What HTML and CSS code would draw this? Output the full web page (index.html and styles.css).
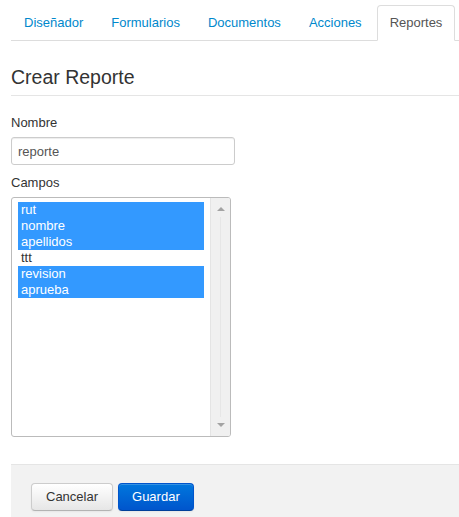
FILE: index.html
```html
<!DOCTYPE html>
<html lang="es">
<head>
<meta charset="utf-8">
<link rel="stylesheet" href="styles.css">
</head>
<body>
<div class="page">
  <ul class="tabs">
    <li class="tab"><a href="#">Diseñador</a></li>
    <li class="tab"><a href="#">Formularios</a></li>
    <li class="tab"><a href="#">Documentos</a></li>
    <li class="tab"><a href="#">Acciones</a></li>
    <li class="tab active"><a href="#">Reportes</a></li>
  </ul>
  <form class="form">
    <div class="legend">Crear Reporte</div>
    <label class="label">Nombre</label>
    <input class="input" type="text" value="reporte">
    <label class="label">Campos</label>
    <div class="listbox">
      <div class="options">
        <div class="option selected">rut</div>
        <div class="option selected">nombre</div>
        <div class="option selected">apellidos</div>
        <div class="option">ttt</div>
        <div class="option selected">revision</div>
        <div class="option selected">aprueba</div>
      </div>
      <div class="scrollbar">
        <span class="arrow up"></span>
        <span class="track"></span>
        <span class="arrow down"></span>
      </div>
    </div>
    <div class="actions">
      <button type="button" class="btn">Cancelar</button>
      <button type="button" class="btn primary">Guardar</button>
    </div>
  </form>
</div>
</body>
</html>
```

FILE: styles.css
```css
* { box-sizing: border-box; }
html, body { margin: 0; padding: 0; background: #fff; }
body {
  font-family: "Liberation Sans", Arial, Helvetica, sans-serif;
  font-size: 13px;
  line-height: 18px;
  color: #333;
  overflow: hidden;
}
.page {
  padding: 5px 0 0 11px;
}
.tabs {
  list-style: none;
  margin: 0 0 18px;
  padding: 0;
  display: flex;
  border-bottom: 1px solid #ddd;
}
.tab {
  margin-bottom: -1px;
}
.tab a {
  display: block;
  padding: 8px 12px;
  margin-right: 2px;
  line-height: 18px;
  border: 1px solid transparent;
  border-radius: 4px 4px 0 0;
  color: #0088cc;
  text-decoration: none;
}
.tab.active a {
  color: #555;
  background: #fff;
  border-color: #ddd #ddd transparent;
}
.form {
  margin: 0;
}
.legend {
  font-size: 19.5px;
  line-height: 36px;
  color: #333;
  border-bottom: 1px solid #e5e5e5;
  margin-bottom: 18px;
}
.label {
  display: block;
  margin-bottom: 5px;
  line-height: 18px;
}
.input {
  display: block;
  width: 224px;
  height: 28px;
  padding: 4px 6px;
  margin: 0 0 9px;
  font-family: inherit;
  font-size: 13px;
  line-height: 18px;
  color: #555;
  border: 1px solid #ccc;
  border-radius: 3px;
  box-shadow: inset 0 1px 1px rgba(0,0,0,0.075);
}
.listbox {
  display: flex;
  width: 220px;
  height: 240px;
  border: 1px solid #bbb;
  border-radius: 3px;
  margin-bottom: 27px;
  background: #fff;
  overflow: hidden;
}
.options {
  flex: 1;
  padding: 4px 6px;
}
.option {
  height: 16px;
  line-height: 16px;
  padding: 0 3px;
  color: #333;
}
.option.selected {
  background: #3399ff;
  color: #fff;
}
.scrollbar {
  width: 20px;
  display: flex;
  flex-direction: column;
  align-items: center;
  background: #f0f0f0;
  border-left: 1px solid #e4e4e4;
  padding: 9px 0 9px;
}
.track {
  flex: 1;
  width: 1px;
  margin: 6px 0;
  background: #e6e6e6;
}
.arrow {
  width: 0;
  height: 0;
  border-left: 4px solid transparent;
  border-right: 4px solid transparent;
}
.arrow.up { border-bottom: 4px solid #a3a3a3; }
.arrow.down { border-top: 4px solid #a3a3a3; }
.actions {
  margin-top: 27px;
  padding: 18px 20px 20px;
  background: #f2f2f2;
  border-top: 1px solid #e5e5e5;
  display: flex;
  gap: 5px;
}
.btn {
  height: 28px;
  padding: 4px 14px;
  font-family: inherit;
  font-size: 13px;
  line-height: 18px;
  color: #333;
  border: 1px solid #ccc;
  border-bottom-color: #b3b3b3;
  border-radius: 4px;
  background: linear-gradient(to bottom, #ffffff, #e6e6e6);
  box-shadow: inset 0 1px 0 rgba(255,255,255,0.2), 0 1px 2px rgba(0,0,0,0.05);
}
.btn.primary {
  padding: 4px 13px;
  color: #fff;
  border-color: #0055cc #0055cc #003f99;
  background: linear-gradient(to bottom, #0077dd, #0055cc);
}
```
